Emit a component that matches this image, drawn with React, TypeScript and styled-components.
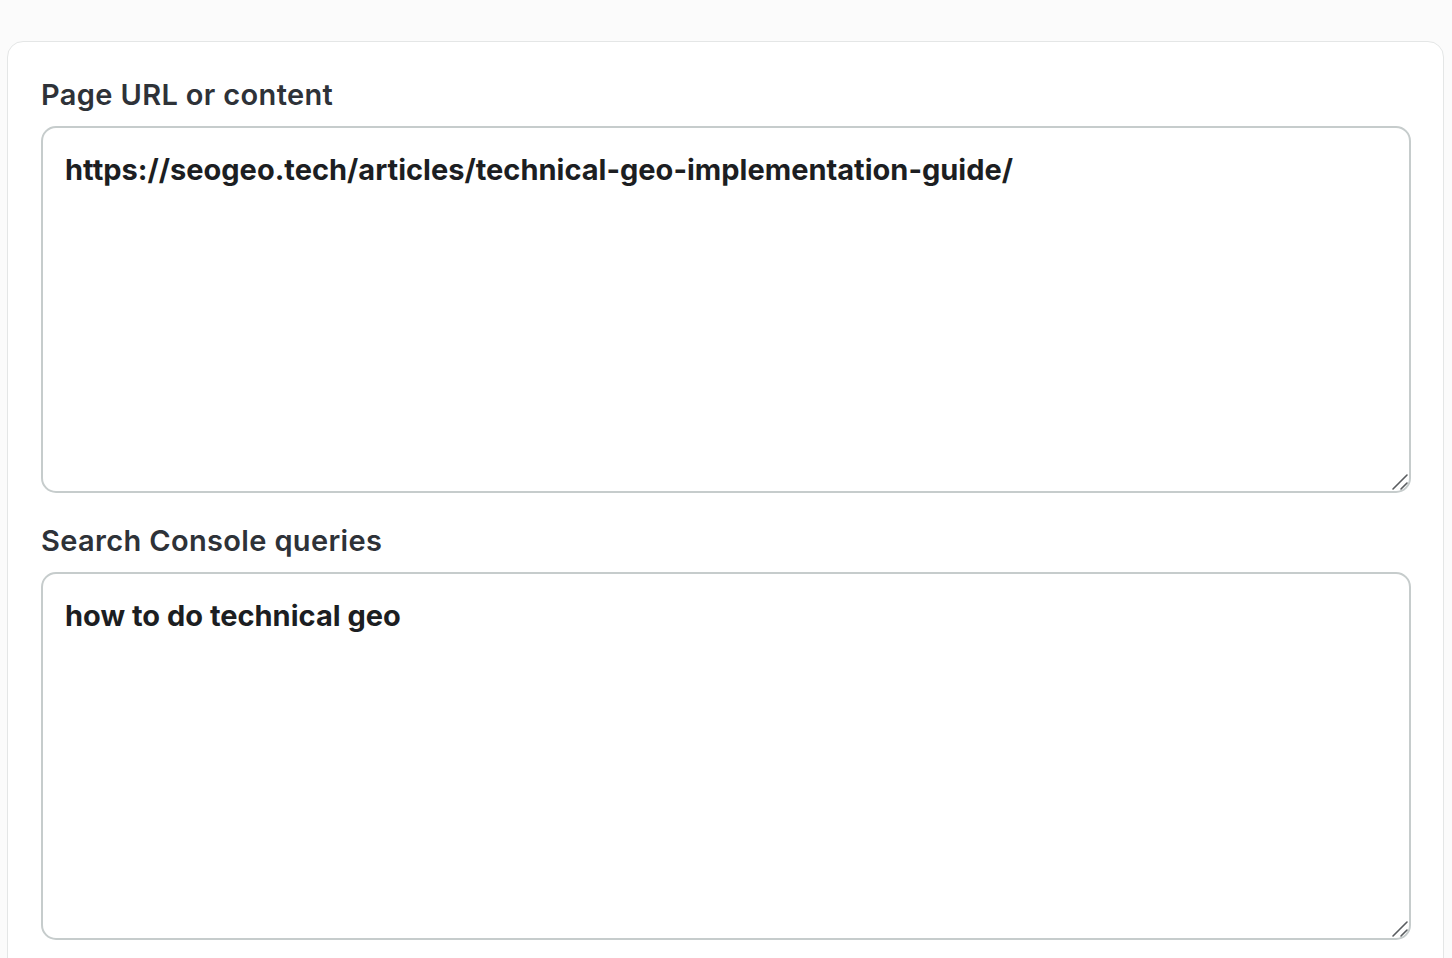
import React from "react";
import styled, { createGlobalStyle } from "styled-components";

const GlobalStyle = createGlobalStyle`
  html, body {
    margin: 0;
    padding: 0;
    background-color: #fbfbfb;
  }
  body {
    font-family: Inter, "Noto Sans", "Liberation Sans", sans-serif;
    -webkit-font-smoothing: antialiased;
  }
  * {
    box-sizing: border-box;
  }
`;

const Page = styled.div`
  padding: 41px 8px 0 7px;
`;

const Card = styled.div`
  background-color: #fff;
  border: 1px solid #e4e6e6;
  border-radius: 16px;
  padding: 35px 32px 40px 33px;
  display: flex;
  flex-direction: column;
  gap: 30px;
`;

const Field = styled.div`
  display: flex;
  flex-direction: column;
  gap: 13px;
`;

const Label = styled.label`
  font-size: 29px;
  line-height: 36px;
  font-weight: 600;
  color: #2e3238;
  letter-spacing: 0.35px;
`;

const InputWrap = styled.div`
  position: relative;
`;

const TextArea = styled.textarea<{ $height: number }>`
  display: block;
  width: 100%;
  height: ${(p) => p.$height}px;
  border: 2px solid #c6cccc;
  border-radius: 15px;
  padding: 20px 22px;
  font-family: Inter, "Noto Sans", "Liberation Sans", sans-serif;
  font-size: 29px;
  line-height: 44px;
  font-weight: 700;
  color: #1c1e22;
  background: #fff;
  resize: none;
  outline: none;
`;

const Grip = styled.svg`
  position: absolute;
  right: 2px;
  bottom: 2px;
  width: 18px;
  height: 18px;
  pointer-events: none;
`;

const fields = [
  {
    id: "page",
    label: "Page URL or content",
    value: "https://seogeo.tech/articles/technical-geo-implementation-guide/",
    height: 367,
  },
  {
    id: "queries",
    label: "Search Console queries",
    value: "how to do technical geo",
    height: 368,
  },
];

const App = () => {
  return (
    <Page>
      <GlobalStyle />
      <Card>
        {fields.map((field) => (
          <Field key={field.id}>
            <Label htmlFor={field.id}>{field.label}</Label>
            <InputWrap>
              <TextArea
                id={field.id}
                $height={field.height}
                defaultValue={field.value}
                spellCheck={false}
              />
              <Grip viewBox="0 0 18 18">
                <path
                  d="M2 16 L16 2 M10 16 L16 10"
                  stroke="#5a5d60"
                  strokeWidth="1.6"
                  strokeLinecap="round"
                />
              </Grip>
            </InputWrap>
          </Field>
        ))}
      </Card>
    </Page>
  );
};

export default App;
